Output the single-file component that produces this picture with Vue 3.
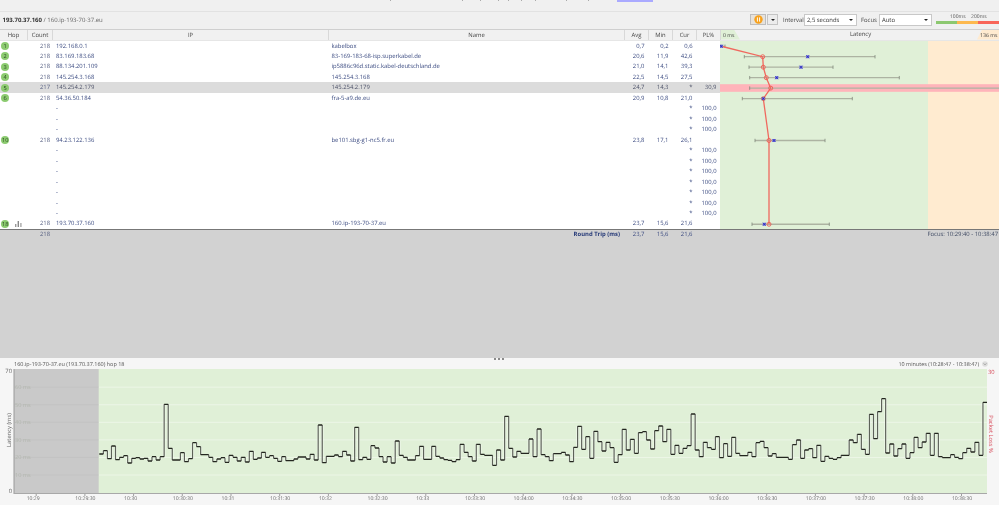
<script setup>
const blank = { blank: true }
const hops = [
  { n: 1, count: 218, ip: '192.168.0.1', name: 'kabelbox', avg: '0,7', min: '0,2', cur: '0,6', pl: '' },
  { n: 2, count: 218, ip: '83.169.183.68', name: '83-169-183-68-isp.superkabel.de', avg: '20,6', min: '11,9', cur: '42,6', pl: '' },
  { n: 3, count: 218, ip: '88.134.201.109', name: 'ip5886c96d.static.kabel-deutschland.de', avg: '21,0', min: '14,1', cur: '39,3', pl: '' },
  { n: 4, count: 218, ip: '145.254.3.168', name: '145.254.3.168', avg: '22,5', min: '14,5', cur: '27,5', pl: '' },
  { n: 5, count: 217, ip: '145.254.2.179', name: '145.254.2.179', avg: '24,7', min: '14,3', cur: '*', pl: '30,9', hot: true },
  { n: 6, count: 218, ip: '54.36.50.184', name: 'fra-5-a9.de.eu', avg: '20,9', min: '10,8', cur: '21,0', pl: '' },
  blank, blank, blank,
  { n: 10, count: 218, ip: '94.23.122.136', name: 'be101.sbg-g1-nc5.fr.eu', avg: '23,8', min: '17,1', cur: '26,1', pl: '' },
  blank, blank, blank, blank, blank, blank, blank,
  { n: 18, count: 218, ip: '193.70.37.160', name: '160.ip-193-70-37.eu', avg: '23,7', min: '15,6', cur: '21,6', pl: '', chart: true }
].map((h, i) => (h.blank
  ? { n: '', count: '', ip: '-', name: '', avg: '', min: '', cur: '*', pl: '100,0', key: i }
  : { ...h, key: i }))

const stripDots = [390, 462, 480, 498, 508, 521, 535, 566, 588]

const RH = 10.47
const cy = (n) => 5.25 + RH * (n - 1)
// latency graph, x in the graph's own coordinates (column starts at 720)
const marks = [
  { n: 1, lo: 1, hi: 5, avg: 1.3, cur: 1.3 },
  { n: 2, lo: 24.3, hi: 155, avg: 42.7, cur: 87.7 },
  { n: 3, lo: 29, hi: 113, avg: 43.3, cur: 81 },
  { n: 4, lo: 29.7, hi: 179.3, avg: 46.3, cur: 56.7 },
  { n: 5, lo: 29.7, hi: 280, avg: 50.7, cur: null },
  { n: 6, lo: 22.3, hi: 132.3, avg: 43.3, cur: 43.3 },
  { n: 10, lo: 35, hi: 105, avg: 49, cur: 54 },
  { n: 18, lo: 32, hi: 109.3, avg: 49, cur: 44.3 }
].map((m) => ({ ...m, y: cy(m.n) }))
const redLine = marks.map((m) => `${m.avg},${m.y}`).join(' ')

// time series: y in 3x-zoom coordinates measured from y=350
const series = [
  312,302,326,288,329,322,317,339,325,323,327,325,333,320,330,320,163,295,330,330,308,335,326,278,290,314,314,322,335,327,323,337,316,322,333,322,336,304,328,324,307,322,317,325,334,320,332,332,327,321,321,327,313,330,225,338,319,319,315,320,
  304,315,333,232,329,322,328,287,294,320,336,320,339,273,316,322,330,330,317,289,328,328,289,319,324,329,331,335,329,283,307,320,333,283,313,316,316,346,300,330,199,295,321,304,310,310,267,320,237,314,320,332,311,311,307,315,335,292,229,298,260,325,244,275,303,277,293,337,314,238,300,268,310,248,245,270,297,242,228,275,238,
  313,286,310,295,287,192,300,320,277,293,298,260,323,281,319,262,310,317,317,307,320,278,274,293,318,311,322,322,322,328,284,270,325,300,296,323,286,334,319,325,328,323,316,316,270,278,253,298,313,193,266,185,146,309,282,318,296,282,325,308,262,293,276,250,316,250,320,323,323,314,322,326,308,295,306,277,316,157
]
const X0 = 99.3
const XSTEP = (987 - X0) / series.length
const CHART_TOP = 369
const py = (z) => +(350 + z / 3 - CHART_TOP).toFixed(2)
const sx = (i) => +(X0 + i * XSTEP).toFixed(2)
const flatPath = series.map((z, i) => `M${sx(i)} ${py(z)}L${sx(i + 1)} ${py(z)}`).join('')
const risePath = series.slice(1).map((z, i) => `M${sx(i + 1)} ${py(series[i])}L${sx(i + 1)} ${py(z)}`).join('')

const gridLines = [10, 20, 30, 40, 50, 60].map((v) => ({ v, y: 123.6 - v * 1.757 }))
const ticks = ['10:29','10:29:30','10:30','10:30:30','10:31','10:31:30','10:32','10:32:30','10:33','10:33:30','10:34:00','10:34:30','10:35:00','10:35:30','10:36:00','10:36:30','10:37:00','10:37:30','10:38:00','10:38:30']
  .map((t, i) => {
    const x = 962 - (19 - i) * 48.7
    return { t, x, lx: t.length === 5 ? x - 3.5 : x }
  })
</script>

<template>
  <div class="app">
    <div class="strip">
      <span v-for="x in stripDots" :key="x" class="dot" :style="{ left: x + 'px' }"></span>
      <span class="clip"></span>
    </div>

    <div class="toolbar">
      <div class="target"><b>193.70.37.160</b> / 160.ip-193-70-37.eu</div>
      <div class="pause">
        <svg width="9" height="9" viewBox="0 0 9 9">
          <circle cx="4.5" cy="4.5" r="4.2" fill="#f7a11d" />
          <rect x="2.9" y="2.4" width="1.1" height="4.2" fill="#fff3de" />
          <rect x="5" y="2.4" width="1.1" height="4.2" fill="#fff3de" />
        </svg>
      </div>
      <div class="drop"><em></em></div>
      <span class="lbl">Interval</span>
      <div class="select sel-a"><span>2,5 seconds</span><em></em></div>
      <span class="lbl">Focus</span>
      <div class="select sel-b"><span>Auto</span><em></em></div>
      <div class="legend">
        <div class="legend-t"><span>100ms</span><span>200ms</span></div>
        <div class="legend-b"><i class="g"></i><i class="o"></i><i class="rd"></i></div>
      </div>
    </div>

    <div class="head">
      <div class="hc c-hop mid">Hop</div>
      <div class="hc c-count mid">Count</div>
      <div class="hc c-ip mid">IP</div>
      <div class="hc c-name mid">Name</div>
      <div class="hc c-n mid">Avg</div>
      <div class="hc c-n mid">Min</div>
      <div class="hc c-n mid">Cur</div>
      <div class="hc c-n mid">PL%</div>
      <div class="hc-graph">
        <span class="zero">0 ms</span>
        <span class="lat">Latency</span>
        <span class="max">136 ms</span>
      </div>
    </div>

    <div class="table">
      <div class="rows">
        <div v-for="h in hops" :key="h.key" class="row" :class="{ hot: h.hot }">
          <div class="c-hop hopcell">
            <span v-if="h.n" class="badge">{{ h.n }}</span>
            <svg v-if="h.chart" class="mini" width="7" height="6" viewBox="0 0 7 6">
              <rect x="0" y="3" width="1.4" height="3" fill="#999" />
              <rect x="2.6" y="0" width="1.4" height="6" fill="#888" />
              <rect x="5.2" y="2" width="1.4" height="4" fill="#aaa" />
            </svg>
          </div>
          <div class="c-count r">{{ h.count }}</div>
          <div class="c-ip">{{ h.ip }}</div>
          <div class="c-name">{{ h.name }}</div>
          <div class="c-n r">{{ h.avg }}</div>
          <div class="c-n r">{{ h.min }}</div>
          <div class="c-n r">{{ h.cur }}</div>
          <div class="c-n r">{{ h.pl }}</div>
        </div>
      </div>
      <svg class="graph" width="279" height="188.5" viewBox="0 0 279 188.5">
        <rect x="0" y="0" width="208" height="188.5" fill="#e0f0d7" />
        <rect x="208" y="0" width="71" height="188.5" fill="#ffebd0" />
        <rect x="0" y="43.2" width="279" height="7.6" fill="#ffb4ba" />
        <g v-for="m in marks" :key="m.n">
          <line :x1="m.lo" :x2="m.hi" :y1="m.y" :y2="m.y" stroke="#adb3a2" stroke-width="1.3" />
          <line :x1="m.lo" :x2="m.lo" :y1="m.y - 1.7" :y2="m.y + 1.7" stroke="#7d8578" stroke-width=".8" />
          <line :x1="m.hi" :x2="m.hi" :y1="m.y - 1.7" :y2="m.y + 1.7" stroke="#7d8578" stroke-width=".8" />
        </g>
        <polyline :points="redLine" fill="none" stroke="#f0695f" stroke-width="1.3" />
        <g v-for="m in marks" :key="'p' + m.n">
          <g v-if="m.cur !== null">
            <rect :x="m.cur - 1.5" :y="m.y - 1.5" width="3" height="3" fill="#6a6ae4" />
            <path :d="`M${m.cur - 1.5} ${m.y - 1.5}l3 3m0 -3l-3 3`" stroke="#1c1ca8" stroke-width=".6" />
          </g>
          <circle v-if="m.n > 1 && m.n !== 6" :cx="m.avg" :cy="m.y" r="2" fill="none" stroke="#ef5b52" stroke-width=".9" />
          <circle v-if="m.n === 6" :cx="m.avg" :cy="m.y" r="2" fill="none" stroke="#c0504d" stroke-width=".6" />
        </g>
      </svg>
    </div>

    <div class="totals">
      <div class="c-hop"></div>
      <div class="c-count r">218</div>
      <div class="c-ip"></div>
      <div class="c-name rt"><b>Round Trip (ms)</b></div>
      <div class="c-n r">23,7</div>
      <div class="c-n r">15,6</div>
      <div class="c-n r">21,6</div>
      <div class="c-n r"></div>
      <div class="focus">Focus: 10:29:40 - 10:38:47</div>
    </div>
    <div class="spare"></div>

    <div class="bottom">
      <div class="bt-head">
        <span class="bt-title">160.ip-193-70-37.eu (193.70.37.160) hop 18</span>
        <span class="dots"><i></i><i></i><i></i></span>
        <span class="range">10 minutes (10:28:47 - 10:38:47)</span>
        <svg class="chev" width="6" height="6" viewBox="0 0 6 6">
          <circle cx="3" cy="3" r="2.8" fill="#dcdcdc" />
          <path d="M1.6 2.4L3 3.8L4.4 2.4" fill="none" stroke="#888" stroke-width=".7" />
        </svg>
      </div>
      <svg class="chart" width="999" height="136" viewBox="0 0 999 136">
        <rect x="14" y="0" width="973" height="124" fill="#e0f0d7" />
        <rect x="14" y="0" width="84.7" height="124" fill="#c9c9c9" />
        <g v-for="g in gridLines" :key="g.v">
          <line x1="98.7" x2="987" :y1="g.y" :y2="g.y" stroke="#ffffff" stroke-opacity=".4" stroke-width="1" />
          <line x1="14" x2="98.7" :y1="g.y" :y2="g.y" stroke="#bdbdbd" stroke-opacity=".5" stroke-width="1" />
          <text x="15" :y="g.y + 2" class="gl">{{ g.v }} ms</text>
        </g>
        <line x1="14" x2="14" y1="0" y2="125" stroke="#9a9a9a" stroke-width="1" />
        <line x1="14" x2="987" y1="124.5" y2="124.5" stroke="#a8a8a8" stroke-width="1" />
        <path :d="risePath" fill="none" stroke="#ffffff" stroke-opacity=".5" stroke-width="2.6" />
        <path :d="risePath" fill="none" stroke="#5c6258" stroke-width="1.2" />
        <path :d="flatPath" fill="none" stroke="#23261f" stroke-width="1.3" />
        <text x="12" y="4" class="ax" text-anchor="end">70</text>
        <text x="12" y="124" class="ax" text-anchor="end">0</text>
        <text x="988" y="4.5" class="ax red">30</text>
        <text class="ax" text-anchor="middle" transform="translate(11 61) rotate(-90)">Latency (ms)</text>
        <text class="ax red" text-anchor="middle" transform="translate(989 65) rotate(90)">Packet Loss %</text>
        <g v-for="t in ticks" :key="t.t">
          <line :x1="t.x - 0.5" :x2="t.x - 0.5" y1="125" y2="127" stroke="#888" stroke-width=".8" />
          <text :x="t.lx" y="130.5" class="tk" text-anchor="middle">{{ t.t }}</text>
        </g>
      </svg>
    </div>
  </div>
</template>

<style scoped>
.app {
  width: 999px;
  height: 505px;
  overflow: hidden;
  display: flex;
  flex-direction: column;
  background: #f0f0f0;
  font-family: "Open Sans", "Noto Sans", sans-serif;
  font-size: 5.9px;
  text-rendering: geometricPrecision;
  color: #444;
  filter: blur(0.35px);
}
.strip { height: 12px; flex: none; position: relative; border-bottom: 1px solid #e2e2e2; box-sizing: border-box; }
.clip { position: absolute; left: 617px; top: 0; width: 36px; height: 2px; background: #aaaaff; }
.dot { position: absolute; top: 0; width: 1px; height: 1px; background: #aaa; }

.toolbar { height: 17.5px; flex: none; display: flex; align-items: center; border-bottom: 1px solid #cfcfcf; box-sizing: border-box; padding-bottom: 1px; }
.target { width: 750px; padding-left: 2.5px; box-sizing: border-box; color: #666; font-size: 6px; }
.target b { color: #333; font-weight: 700; }
.pause { width: 16px; height: 11px; box-sizing: border-box; border: 1px solid #bdbdbd; background: #e6e2dc; display: flex; align-items: center; justify-content: center; }
.pause svg { display: block; }
.drop { width: 11px; height: 11px; margin-left: 1px; box-sizing: border-box; border: 1px solid #c4c4c4; background: #ececec; display: flex; align-items: center; justify-content: center; }
em { display: block; width: 0; height: 0; border-left: 2px solid transparent; border-right: 2px solid transparent; border-top: 2.4px solid #222; }
.lbl { margin-left: 5px; width: 21px; color: #444; }
.lbl + .sel-b { margin-left: -3px; }
.select { height: 11.5px; box-sizing: border-box; border: 1px solid #c8c8c8; background: #fff; display: flex; align-items: center; justify-content: space-between; padding: 0 3px 0 2px; color: #333; font-size: 5.9px; }
.sel-a { width: 53px; margin-right: -1px; }
.sel-b { width: 53px; }
.legend { margin-left: 4px; width: 63px; }
.legend-t { display: flex; justify-content: flex-start; font-size: 5px; line-height: 5px; padding-left: 14px; gap: 5.5px; color: #555; }
.legend-b { display: flex; height: 3px; margin-top: 1px; }
.legend-b i { flex: 1; }
.g { background: #8cc870; }
.o { background: #fdb94f; }
.rd { background: #f8665a; }
.r { text-align: right; }

.head { height: 11px; flex: none; display: flex; background: #f1f1f1; border-bottom: 1px solid #e6e6e6; box-sizing: border-box; line-height: 10px; }
.hc { border-right: 1px solid #d8d8d8; box-sizing: border-box; }
.mid { text-align: center; }
.hc-graph { flex: 1; position: relative; }
.hc-graph::before { content: ""; position: absolute; left: 0; top: 0; bottom: 0; width: 19px; background: #e0f0d7; clip-path: polygon(0 0, 13px 0, 19px 100%, 0 100%); }
.hc-graph::after { content: ""; position: absolute; right: 0; top: 0; bottom: 0; width: 22px; background: #ffebd0; clip-path: polygon(5px 0, 100% 0, 100% 100%, 0 100%); }
.zero, .max { position: absolute; z-index: 1; top: 0; font-size: 5.2px; }
.zero { left: 2px; }
.max { left: 259px; white-space: nowrap; }
.lat { position: absolute; left: 129px; top: -1px; }

.c-hop { width: 28px; flex: none; }
.c-count { width: 25px; flex: none; }
.c-ip { width: 276px; flex: none; }
.c-name { width: 296px; flex: none; }
.c-n { width: 24px; flex: none; }

.table { height: 188.5px; flex: none; display: flex; background: #fff; }
.rows { width: 720px; flex: none; color: #3a4a80; }
.row { height: 10.47px; line-height: 10.47px; display: flex; }
.row.hot { background: #dcdcdc; color: #4a4f66; }
.row .c-count, .totals .c-count { padding-right: 3px; box-sizing: border-box; color: #555e80; }
.row .c-ip, .totals .c-ip { padding-left: 3px; box-sizing: border-box; }
.row .c-name { padding-left: 2.5px; box-sizing: border-box; }
.row .c-n, .totals .c-n { padding-right: 4.5px; box-sizing: border-box; }
.hopcell { display: flex; align-items: center; padding-left: 1.2px; box-sizing: border-box; }
.badge { min-width: 8px; height: 8px; border-radius: 4px; background: #8ccb70; color: #2b4b22; font-size: 5.6px; line-height: 8px; text-align: center; box-sizing: border-box; }
.mini { margin-left: 5.5px; }
.graph { flex: none; display: block; }

.totals { height: 9.5px; flex: none; display: flex; line-height: 9px; background: #d2d2d2; border-top: 1.5px solid #777; box-sizing: border-box; color: #3a4a80; position: relative; }
.rt { text-align: right; padding-right: 5px; box-sizing: border-box; color: #263a78; }
.focus { position: absolute; right: 1px; top: 0; color: #3f4a63; }
.spare { height: 119.5px; flex: none; background: #d2d2d2; }

.bottom { flex: 1; background: #f6f6f6; }
.bt-head { height: 11px; display: flex; align-items: center; padding-left: 14px; padding-right: 20px; color: #555; position: relative; }
.bt-title { font-size: 5.5px; }
.range { margin-left: auto; font-size: 5.45px; }
.chev { position: absolute; left: 982px; top: 3px; }
.dots { position: absolute; left: 494px; top: 0; display: flex; gap: 2px; }
.dots i { width: 2px; height: 2px; border-radius: 50%; background: #666; }
.chart { display: block; overflow: visible; }
.gl { font-size: 5.6px; fill: #b4b8b0; }
.ax { font-size: 5.8px; fill: #666; }
.red { fill: #d8505e; }
.tk { font-size: 5.1px; fill: #666; }
</style>
